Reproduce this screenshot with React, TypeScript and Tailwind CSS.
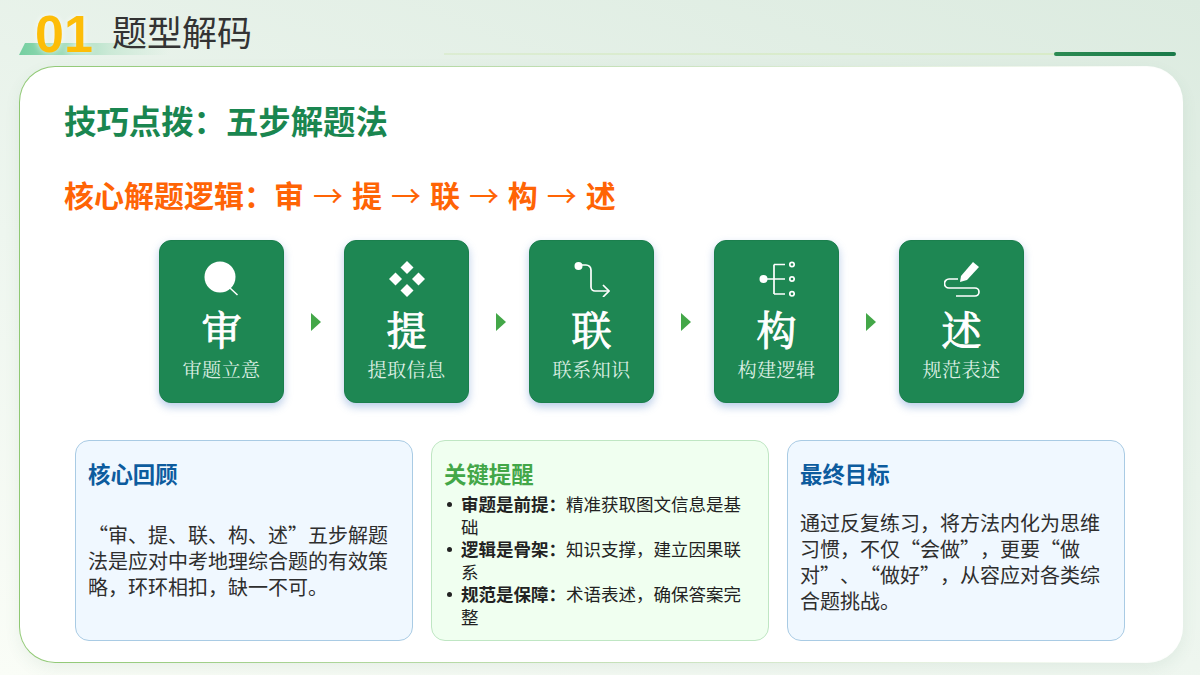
const SANS = "font-['Noto_Sans_CJK_SC','Liberation_Sans',sans-serif]";

function IconSearch() {
  return (
    <svg width="36" height="36" viewBox="0 0 36 36" fill="none">
      <circle cx="16" cy="16" r="15.500" fill="#fff" />
      <path d="M26 27l7.500 7" stroke="#fff" strokeWidth="1.500" />
    </svg>
  );
}
function IconDiamonds() {
  return (
    <svg width="36" height="36" viewBox="0 0 36 36" fill="#fff">
      <path d="M18 0l6.500 6.500L18 13l-6.500-6.500z" />
      <path d="M6.500 11.500L13 18l-6.500 6.500L0 18z" />
      <path d="M29.500 11.500L36 18l-6.500 6.500L23 18z" />
      <path d="M18 23l6.500 6.500L18 36l-6.500-6.500z" />
    </svg>
  );
}
function IconRoute() {
  return (
    <svg width="36" height="36" viewBox="0 0 36 36" fill="none" stroke="#fff" strokeWidth="1.700">
      <circle cx="4.500" cy="5" r="4" fill="#fff" stroke="none" />
      <path d="M6 4h6a5 5 0 0 1 5 5v17a4 4 0 0 0 4 4h13" />
      <path d="M29 24l6 6-6 6" />
    </svg>
  );
}
function IconTree() {
  return (
    <svg width="36" height="36" viewBox="0 0 36 36" fill="none" stroke="#fff" strokeWidth="1.700">
      <circle cx="4.500" cy="18" r="4" fill="#fff" stroke="none" />
      <path d="M6 18h20M15 3.500h11M15 33h11M15 3.500V33" />
      <circle cx="33" cy="3.500" r="2.200" />
      <circle cx="33" cy="18" r="2.200" />
      <circle cx="33" cy="32.800" r="2.200" />
    </svg>
  );
}
function IconWrite() {
  return (
    <svg width="36" height="36" viewBox="0 0 36 36" fill="none" stroke="#fff" strokeWidth="1.700">
      <path d="M17 15L29 1l6 5-12 13-7 2z" fill="#fff" stroke="none" />
      <path d="M14 18H5a4.500 4.500 0 0 0 0 9h26a4 4 0 0 1 0 8H12" />
    </svg>
  );
}

const steps = [
  { icon: <IconSearch />, big: "审", small: "审题立意" },
  { icon: <IconDiamonds />, big: "提", small: "提取信息" },
  { icon: <IconRoute />, big: "联", small: "联系知识" },
  { icon: <IconTree />, big: "构", small: "构建逻辑" },
  { icon: <IconWrite />, big: "述", small: "规范表述" },
];

function Step({ icon, big, small }: { icon: React.ReactNode; big: string; small: string }) {
  return (
    <div className="w-[125px] h-[163px] shrink-0 rounded-[12px] bg-[#1e8753] border border-[#1b7f4d] shadow-[0_4px_8px_rgba(80,130,200,0.4)] flex flex-col items-center pt-[20px] text-white font-['Liberation_Serif','Noto_Serif_CJK_SC',serif]">
      {icon}
      <div className="text-[40px] leading-[44px] mt-[13px] [-webkit-text-stroke:1px_#fff]">{big}</div>
      <div className="text-[19.2px] leading-[24px] mt-[5px] text-[#dcefe3] tracking-[0.3px]">{small}</div>
    </div>
  );
}

function Arrow() {
  return <div className="w-0 h-0 ml-[27px] mr-[23px] border-y-[9px] border-y-transparent border-l-[10px] border-l-[#43a748]" />;
}

function Bullet({ b, t }: { b: string; t: string }) {
  return (
    <li className="relative text-[17.5px] leading-[22.5px] text-[#222] before:absolute before:left-[-14.5px] before:top-[9px] before:w-[5px] before:h-[5px] before:rounded-full before:bg-[#222]">
      <b className="font-bold">{b}</b>
      {t}
    </li>
  );
}

function Arr() {
  return <span className="font-normal"> → </span>;
}

export default function App() {
  return (
    <div className={`w-[1200px] h-[675px] overflow-hidden flex flex-col [text-spacing-trim:space-all] bg-[linear-gradient(20deg,#fafdf7_0%,#eef6ef_40%,#dcebe0_100%)] ${SANS}`}>
      <header className="relative h-[66px] shrink-0">
        <div className="absolute left-[19px] top-[43px] w-[150px] h-[12px] [clip-path:polygon(4%_0,100%_0,100%_100%,0_100%)] bg-[linear-gradient(90deg,#74cfa0,#cbe9d6_60%,rgba(220,240,228,0))]" />
        <div className="absolute left-[35px] top-[4px] text-[52px] leading-[60px] font-bold text-[#fdbd08] [text-shadow:0_0_6px_rgba(255,255,255,0.7)] font-['Liberation_Sans',sans-serif]">01</div>
        <div className="absolute left-[112px] top-[7px] text-[35px] leading-[48px] text-[#333]">题型解码</div>
        <div className="absolute left-[444px] top-[53px] w-[610px] h-[2px] bg-[linear-gradient(90deg,rgba(214,234,196,0.6),#d8ebc8)]" />
        <div className="absolute left-[1054px] top-[52px] w-[122px] h-[4px] rounded-[2px] bg-[linear-gradient(90deg,#2b8a52,#1a7a49)]" />
      </header>
      <main className="w-[1164px] h-[597px] ml-[19px] rounded-[36px] border border-transparent [background:linear-gradient(#fff,#fff)_padding-box,linear-gradient(90deg,#8fc873,#cfe5c5_60%,#ffffff_100%)_border-box] shadow-[0_6px_16px_rgba(60,120,90,0.08)] flex flex-col pl-[44px]">
        <h1 className="text-[32.4px] leading-[44px] font-bold text-[#1a8650] mt-[31px]">技巧点拨：五步解题法</h1>
        <h2 className="text-[30px] leading-[40px] font-bold text-[#ff6405] mt-[32px] [word-spacing:2.25px]">核心解题逻辑：审<Arr />提<Arr />联<Arr />构<Arr />述</h2>
        <div className="flex items-center mt-[26px] ml-[95px]">
          {steps.map((s, i) => (
            <div key={s.big} className="contents">
              <Step icon={s.icon} big={s.big} small={s.small} />
              {i < 4 && <Arrow />}
            </div>
          ))}
        </div>
        <div className="grid grid-cols-3 gap-[18px] mt-[37px] ml-[11px] w-[1050px] h-[201px]">
          <section className="rounded-[14px] border border-[#a9cbe4] bg-[#f0f8ff] px-[12px] pt-[17px]">
            <h3 className="text-[22.4px] leading-[30px] font-bold text-[#0d5c9e]">核心回顾</h3>
            <p className="text-[20px] leading-[26px] text-[#2e2e2e] mt-[34px]">“审、提、联、构、述”五步解题法是应对中考地理综合题的有效策略，环环相扣，缺一不可。</p>
          </section>
          <section className="rounded-[14px] border border-[#bfe6c3] bg-[#f0fff0] px-[12px] pt-[17px]">
            <h3 className="text-[22.4px] leading-[30px] font-bold text-[#43a748]">关键提醒</h3>
            <ul className="mt-[5px] pl-[17px]">
              <Bullet b="审题是前提：" t="精准获取图文信息是基础" />
              <Bullet b="逻辑是骨架：" t="知识支撑，建立因果联系" />
              <Bullet b="规范是保障：" t="术语表述，确保答案完整" />
            </ul>
          </section>
          <section className="rounded-[14px] border border-[#a9cbe4] bg-[#f0f8ff] px-[12px] pt-[17px]">
            <h3 className="text-[22.4px] leading-[30px] font-bold text-[#0d5c9e]">最终目标</h3>
            <p className="text-[20px] leading-[26px] text-[#2e2e2e] mt-[22px]">通过反复练习，将方法内化为思维习惯，不仅“会做”，更要“做对”、“做好”，从容应对各类综合题挑战。</p>
          </section>
        </div>
      </main>
    </div>
  );
}
